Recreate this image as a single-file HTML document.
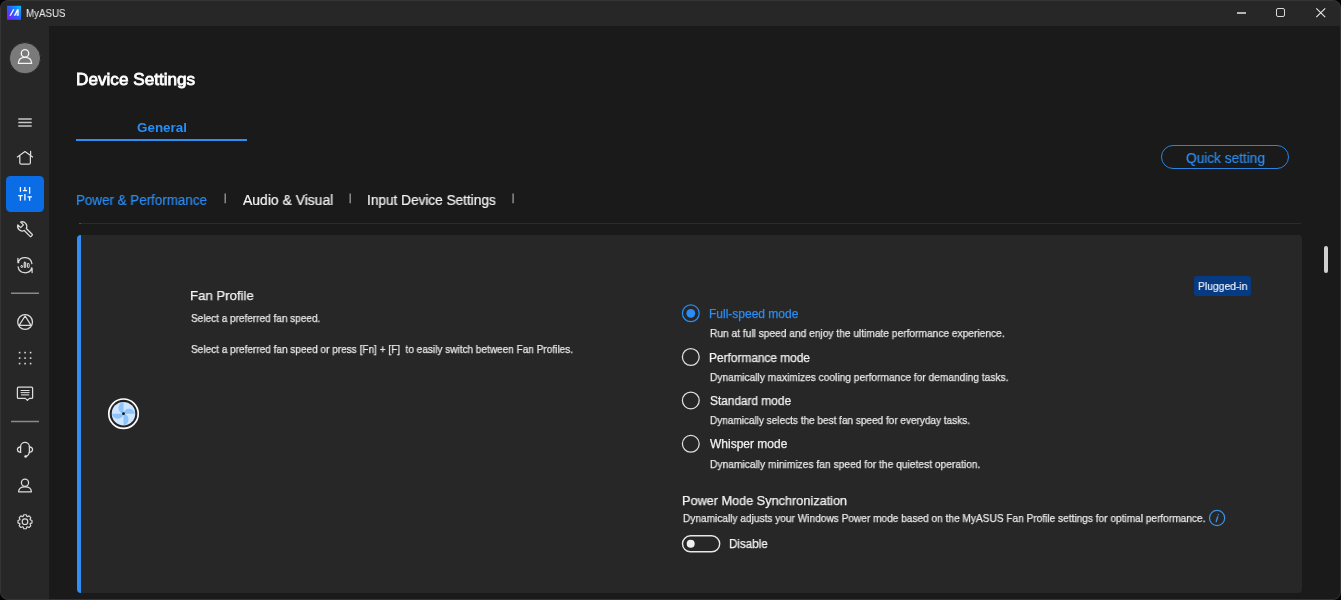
<!DOCTYPE html>
<html><head><meta charset="utf-8">
<style>
html,body{margin:0;padding:0;width:1341px;height:600px;overflow:hidden;background:#000;}
#win{position:absolute;left:0;top:0;width:1341px;height:600px;background:#272727;border-radius:8px;overflow:hidden;}
#content{position:absolute;left:49px;top:26px;width:1292px;height:574px;background:#1a1a1a;}
.t{position:absolute;white-space:nowrap;line-height:1;font-family:"Liberation Sans",sans-serif;transform-origin:0 0;-webkit-font-smoothing:antialiased;will-change:transform;}
.abs{position:absolute;}
</style></head><body>
<div id="win">
<div id="content"></div>
<!-- window border -->
<div class="abs" style="left:0;top:0;width:1339px;height:598px;border:1px solid #353535;border-radius:8px;pointer-events:none;z-index:5"></div>
<!-- logo -->
<svg class="abs" style="left:0;top:0" width="30" height="26" viewBox="0 0 30 26">
<defs><linearGradient id="lg" x1="1" y1="0" x2="0" y2="1"><stop offset="0" stop-color="#00c4ff"/><stop offset="0.5" stop-color="#2a5cff"/><stop offset="1" stop-color="#8a14ff"/></linearGradient></defs>
<rect x="7" y="5.8" width="14" height="14" fill="url(#lg)"/>
<path d="M13 9.3H14.5L10.9 15.8H9.4Z" fill="#fff" opacity="0.95"/>
<path d="M17 9.3H18.7V15.8H16.6V14.2H17.4V12.3L15.3 15.8H13.7Z" fill="#fff" opacity="0.95"/>
</svg>
<!-- sidebar icons -->
<svg class="abs" style="left:0;top:0" width="49" height="600" viewBox="0 0 49 600" fill="none" stroke="#dcdcdc" stroke-width="1.25" stroke-linecap="round" stroke-linejoin="round">
<circle cx="25" cy="58.2" r="15.6" fill="#7a7a7a" stroke="#1e1e1e" stroke-width="0.8"/>
<circle cx="25" cy="53.4" r="3.7" stroke="#f4f4f4" stroke-width="1.3"/>
<path d="M18.3 63.3C18.6 59.6 21.4 57.4 25 57.4C28.6 57.4 31.4 59.6 31.7 63.3Z" stroke="#f4f4f4" stroke-width="1.3"/>
<path d="M18.3 119H31.7M18.3 122.5H31.7M18.3 126H31.7" stroke="#c8c8c8" stroke-width="1.4" stroke-linecap="butt"/>
<path d="M17.4 157L25 151.6L32.6 157M19.8 156V162.7Q19.8 164.2 21.3 164.2H28.9Q30.4 164.2 30.4 162.7V156M30.6 151.4V155.2"/>
<rect x="6" y="176" width="38" height="36" rx="4.5" fill="#0a6de6" stroke="none"/>
<path d="M20.4 187V191.8M18.1 195.6H22.7M20.4 195.6V200.8M24.9 187V190.4M22.9 190.7H27.1M24.9 194V200.6M29.6 187V193.8M27.5 196.8H31.9M29.6 196.8V200.8" stroke="#ffffff" stroke-width="1.3" stroke-linecap="butt"/>
<path id="wrench" d="M20.63 222.08L23.44 224.88L20.68 227.64L17.88 224.83A4.6 4.6 0 0 0 24.26 230.51L30.08 236.33Q30.65 236.90 31.22 236.33L32.13 235.42Q32.70 234.85 32.13 234.28L26.31 228.46A4.6 4.6 0 0 0 20.63 222.08Z"/>
<path d="M18.2 262.4A7.1 7.1 0 0 1 31.9 263.6M31.8 268A7.1 7.1 0 0 1 18.1 266.8M17.9 258.3V262.6H18.8M32.1 272.6V268H31.2"/>
<rect x="20.9" y="265.6" width="1.6" height="1.9" rx="0.5" stroke-width="0.9"/>
<rect x="24.1" y="262.3" width="1.7" height="5.2" rx="0.5" stroke-width="0.9" fill="#9a9a9a"/>
<rect x="27.5" y="263.5" width="1.7" height="4" rx="0.5" stroke-width="0.9"/>
<path d="M11 293.3H39M11 421.5H39" stroke="#8a8a8a" stroke-width="1.5" stroke-linecap="butt"/>
<circle cx="25.1" cy="322" r="7.4"/>
<path d="M25.1 316L19.1 325.4H31.1Z"/>
<g fill="#dcdcdc" stroke="none">
<rect x="18.8" y="351.8" width="1.6" height="1.6"/><rect x="24.3" y="351.8" width="1.6" height="1.6"/><rect x="29.8" y="351.8" width="1.6" height="1.6"/>
<rect x="18.8" y="357.3" width="1.6" height="1.6"/><rect x="24.3" y="357.3" width="1.6" height="1.6"/><rect x="29.8" y="357.3" width="1.6" height="1.6"/>
<rect x="18.8" y="362.8" width="1.6" height="1.6"/><rect x="24.3" y="362.8" width="1.6" height="1.6"/><rect x="29.8" y="362.8" width="1.6" height="1.6"/>
</g>
<path d="M18.4 387.2H31.6Q32.6 387.2 32.6 388.2V397.4Q32.6 398.4 31.6 398.4H29.4L27.4 400.4L25.4 398.4H18.4Q17.4 398.4 17.4 397.4V388.2Q17.4 387.2 18.4 387.2Z"/>
<path d="M21 390.5H29.2M21 392.6H29.2" stroke-width="1"/>
<path d="M21 394.8H29.2" stroke-width="1.8" stroke="#9a9a9a" stroke-linecap="butt"/>
<path d="M20.6 452.4V446.8A4.4 4.4 0 0 1 29.4 446.8V451.2C29.4 453.8 28 455.6 25.8 456.4"/>
<path d="M20.6 446.8C18.6 447 17.4 448 17.4 449.6C17.4 451.2 18.6 452.2 20.6 452.4M29.4 446.8C31.4 447 32.6 448 32.6 449.6C32.6 451.2 31.4 452.2 29.4 452.4"/>
<circle cx="25.6" cy="456.5" r="1.3" fill="#e8e8e8" stroke="none"/>
<circle cx="25" cy="482.7" r="3.6"/>
<path d="M18.6 491.8C18.6 488.6 21.4 486.8 25 486.8C28.6 486.8 31.4 488.6 31.4 491.8Z"/>
<circle cx="25" cy="521.7" r="2.8" stroke-width="1.15"/>
<path d="M26.94 526.85 L26.20 528.70 L23.80 528.70 L23.06 526.85 L22.73 526.71 L20.90 527.50 L19.20 525.80 L19.99 523.97 L19.85 523.64 L18.00 522.90 L18.00 520.50 L19.85 519.76 L19.99 519.43 L19.20 517.60 L20.90 515.90 L22.73 516.69 L23.06 516.55 L23.80 514.70 L26.20 514.70 L26.94 516.55 L27.27 516.69 L29.10 515.90 L30.80 517.60 L30.01 519.43 L30.15 519.76 L32.00 520.50 L32.00 522.90 L30.15 523.64 L30.01 523.97 L30.80 525.80 L29.10 527.50 L27.27 526.71Z" stroke-width="1.15"/>
</svg>
<!-- window controls -->
<div class="abs" style="left:1236.8px;top:12.4px;width:9.2px;height:1.3px;background:#b4b4b4"></div>
<div class="abs" style="left:1276px;top:8px;width:7px;height:7px;border:1.2px solid #d8d8d8;border-radius:2px"></div>
<svg class="abs" style="left:1315px;top:7px" width="12" height="12" viewBox="0 0 12 12"><path d="M1.3 1.3L10.2 10.2M10.2 1.3L1.3 10.2" stroke="#e4e4e4" stroke-width="1.15"/></svg>
<!-- tab underline -->
<div class="abs" style="left:76px;top:139.3px;width:171px;height:1.9px;background:#2f8ef2"></div>
<!-- quick setting button -->
<div class="abs" style="left:1161.2px;top:145.2px;width:125.6px;height:21.8px;border:1.5px solid #2c84e2;border-radius:13px"></div>
<!-- separators -->
<svg class="abs" style="left:0;top:0" width="600" height="220"><path d="M225.2 193.5V203.2M350.2 193.5V203.2M513.1 193.5V203.2" stroke="#9c9c9c" stroke-width="1.3"/></svg>
<!-- hr -->
<div class="abs" style="left:79px;top:223px;width:1222px;height:1px;background:#2b2b2b"></div>
<div class="abs" style="left:79px;top:223px;width:2px;height:1px;background:#245a94"></div>
<!-- card -->
<div class="abs" style="left:77px;top:235px;width:1225px;height:358px;background:#272727;border-radius:4px;overflow:hidden"><div class="abs" style="left:0;top:0;width:4px;height:358px;background:#2f8ff7"></div></div>
<!-- scrollbar -->
<div class="abs" style="left:1324px;top:246px;width:4px;height:27px;background:#d0d0d0;border-radius:2px"></div>
<!-- badge -->
<div class="abs" style="left:1194px;top:276px;width:57px;height:20px;background:#063b84;border-radius:3px"></div>
<!-- content svg: radios, toggle, fan, info -->
<svg class="abs" style="left:0;top:0" width="1341" height="600" viewBox="0 0 1341 600" fill="none">
<circle cx="690.8" cy="313.3" r="8.4" stroke="#2a8cf4" stroke-width="1.25"/>
<circle cx="690.8" cy="313.3" r="4.4" fill="#2a8cf4"/>
<circle cx="690.8" cy="357.0" r="8.4" stroke="#e0e0e0" stroke-width="1.25"/>
<circle cx="690.8" cy="400.4" r="8.4" stroke="#e0e0e0" stroke-width="1.25"/>
<circle cx="690.8" cy="443.8" r="8.4" stroke="#e0e0e0" stroke-width="1.25"/>
<rect x="682.5" y="535.8" width="37.2" height="16" rx="8" stroke="#e8e8e8" stroke-width="1.4"/>
<circle cx="690.7" cy="543.8" r="4" fill="#f0f0f0"/>
<circle cx="1217.1" cy="518" r="7.6" stroke="#3b8ee0" stroke-width="1.3"/>
<path d="M1218.3 514.6V514.8M1217.7 516.8L1216.2 521.6" stroke="#3b8ee0" stroke-width="1.4" stroke-linecap="round"/>
<circle cx="123.5" cy="413.7" r="14.7" stroke="#ffffff" stroke-width="1.7"/>
<circle cx="123.5" cy="413.7" r="12.6" fill="#1a1a1a"/>
<circle cx="123.5" cy="413.7" r="11.8" fill="#cfe4ff"/>
<path d="M123.5 413.7V402.3A5 5.7 0 0 0 123.5 413.7Z M123.5 413.7H134.9A5.7 5 0 0 0 123.5 413.7Z M123.5 413.7V425.1A5 5.7 0 0 0 123.5 413.7Z M123.5 413.7H112.1A5.7 5 0 0 0 123.5 413.7Z" fill="#8cc3fc"/>
<circle cx="123.5" cy="413.7" r="1.4" fill="#111"/>
</svg>

<div id="t_title" class="t" style="left:25.70px;top:7.51px;font-size:10.5px;font-weight:400;color:#ececec;-webkit-text-stroke:0.05px #ececec;transform:scaleX(0.9286)">MyASUS</div>
<div id="t_dev" class="t" style="left:75.96px;top:71.23px;font-size:16.5px;font-weight:400;color:#ffffff;-webkit-text-stroke:0.8px #ffffff;transform:scaleX(1.0395)">Device Settings</div>
<div id="t_gen" class="t" style="left:136.60px;top:121.00px;font-size:13px;font-weight:700;color:#2690f8;-webkit-text-stroke:0px #2690f8;transform:scaleX(1.0312)">General</div>
<div id="t_quick" class="t" style="left:1185.60px;top:150.75px;font-size:14px;font-weight:400;color:#2a8cf2;-webkit-text-stroke:0.2px #2a8cf2;transform:scaleX(0.9753)">Quick setting</div>
<div id="t_pp" class="t" style="left:75.64px;top:192.75px;font-size:14px;font-weight:400;color:#2a8cf2;-webkit-text-stroke:0.2px #2a8cf2;transform:scaleX(0.9559)">Power &amp; Performance</div>
<div id="t_av" class="t" style="left:243.00px;top:192.75px;font-size:14px;font-weight:400;color:#f4f4f4;-webkit-text-stroke:0.2px #f4f4f4;transform:scaleX(0.9944)">Audio &amp; Visual</div>
<div id="t_ids" class="t" style="left:366.63px;top:192.75px;font-size:14px;font-weight:400;color:#f4f4f4;-webkit-text-stroke:0.2px #f4f4f4;transform:scaleX(0.9733)">Input Device Settings</div>
<div id="t_plug" class="t" style="left:1197.70px;top:281.47px;font-size:11.5px;font-weight:400;color:#e8eef8;-webkit-text-stroke:0.2px #e8eef8;transform:scaleX(0.9000)">Plugged-in</div>
<div id="t_fan" class="t" style="left:190.42px;top:289.07px;font-size:13.5px;font-weight:400;color:#f4f4f4;-webkit-text-stroke:0.25px #f4f4f4;transform:scaleX(0.9766)">Fan Profile</div>
<div id="t_sel1" class="t" style="left:191.00px;top:313.09px;font-size:11px;font-weight:400;color:#e8e8e8;-webkit-text-stroke:0.25px #e8e8e8;transform:scaleX(0.9113)">Select a preferred fan speed.</div>
<div id="t_sel2" class="t" style="left:190.60px;top:343.59px;font-size:11px;font-weight:400;color:#e8e8e8;-webkit-text-stroke:0.25px #e8e8e8;transform:scaleX(0.9127)">Select a preferred fan speed or press [Fn] + [F]&nbsp; to easily switch between Fan Profiles.</div>
<div id="t_r1" class="t" style="left:709.00px;top:307.84px;font-size:12px;font-weight:400;color:#2a8cf2;-webkit-text-stroke:0.25px #2a8cf2;transform:scaleX(1.0000)">Full-speed mode</div>
<div id="t_d1" class="t" style="left:709.70px;top:327.69px;font-size:11px;font-weight:400;color:#e8e8e8;-webkit-text-stroke:0.25px #e8e8e8;transform:scaleX(0.9264)">Run at full speed and enjoy the ultimate performance experience.</div>
<div id="t_r2" class="t" style="left:708.71px;top:352.04px;font-size:12px;font-weight:400;color:#f2f2f2;-webkit-text-stroke:0.25px #f2f2f2;transform:scaleX(0.9901)">Performance mode</div>
<div id="t_d2" class="t" style="left:709.70px;top:371.59px;font-size:11px;font-weight:400;color:#e8e8e8;-webkit-text-stroke:0.25px #e8e8e8;transform:scaleX(0.9261)">Dynamically maximizes cooling performance for demanding tasks.</div>
<div id="t_r3" class="t" style="left:709.70px;top:395.44px;font-size:12px;font-weight:400;color:#f2f2f2;-webkit-text-stroke:0.25px #f2f2f2;transform:scaleX(0.9878)">Standard mode</div>
<div id="t_d3" class="t" style="left:709.70px;top:414.59px;font-size:11px;font-weight:400;color:#e8e8e8;-webkit-text-stroke:0.25px #e8e8e8;transform:scaleX(0.9105)">Dynamically selects the best fan speed for everyday tasks.</div>
<div id="t_r4" class="t" style="left:709.50px;top:438.24px;font-size:12px;font-weight:400;color:#f2f2f2;-webkit-text-stroke:0.25px #f2f2f2;transform:scaleX(0.9987)">Whisper mode</div>
<div id="t_d4" class="t" style="left:709.70px;top:458.99px;font-size:11px;font-weight:400;color:#e8e8e8;-webkit-text-stroke:0.25px #e8e8e8;transform:scaleX(0.9310)">Dynamically minimizes fan speed for the quietest operation.</div>
<div id="t_pms" class="t" style="left:681.82px;top:494.40px;font-size:13px;font-weight:400;color:#f4f4f4;-webkit-text-stroke:0.25px #f4f4f4;transform:scaleX(0.9762)">Power Mode Synchronization</div>
<div id="t_pmd" class="t" style="left:682.50px;top:512.59px;font-size:11px;font-weight:400;color:#e8e8e8;-webkit-text-stroke:0.25px #e8e8e8;transform:scaleX(0.9197)">Dynamically adjusts your Windows Power mode based on the MyASUS Fan Profile settings for optimal performance.</div>
<div id="t_dis" class="t" style="left:729.27px;top:538.42px;font-size:12.5px;font-weight:400;color:#f4f4f4;-webkit-text-stroke:0.25px #f4f4f4;transform:scaleX(0.9293)">Disable</div>
</div>
</body></html>
